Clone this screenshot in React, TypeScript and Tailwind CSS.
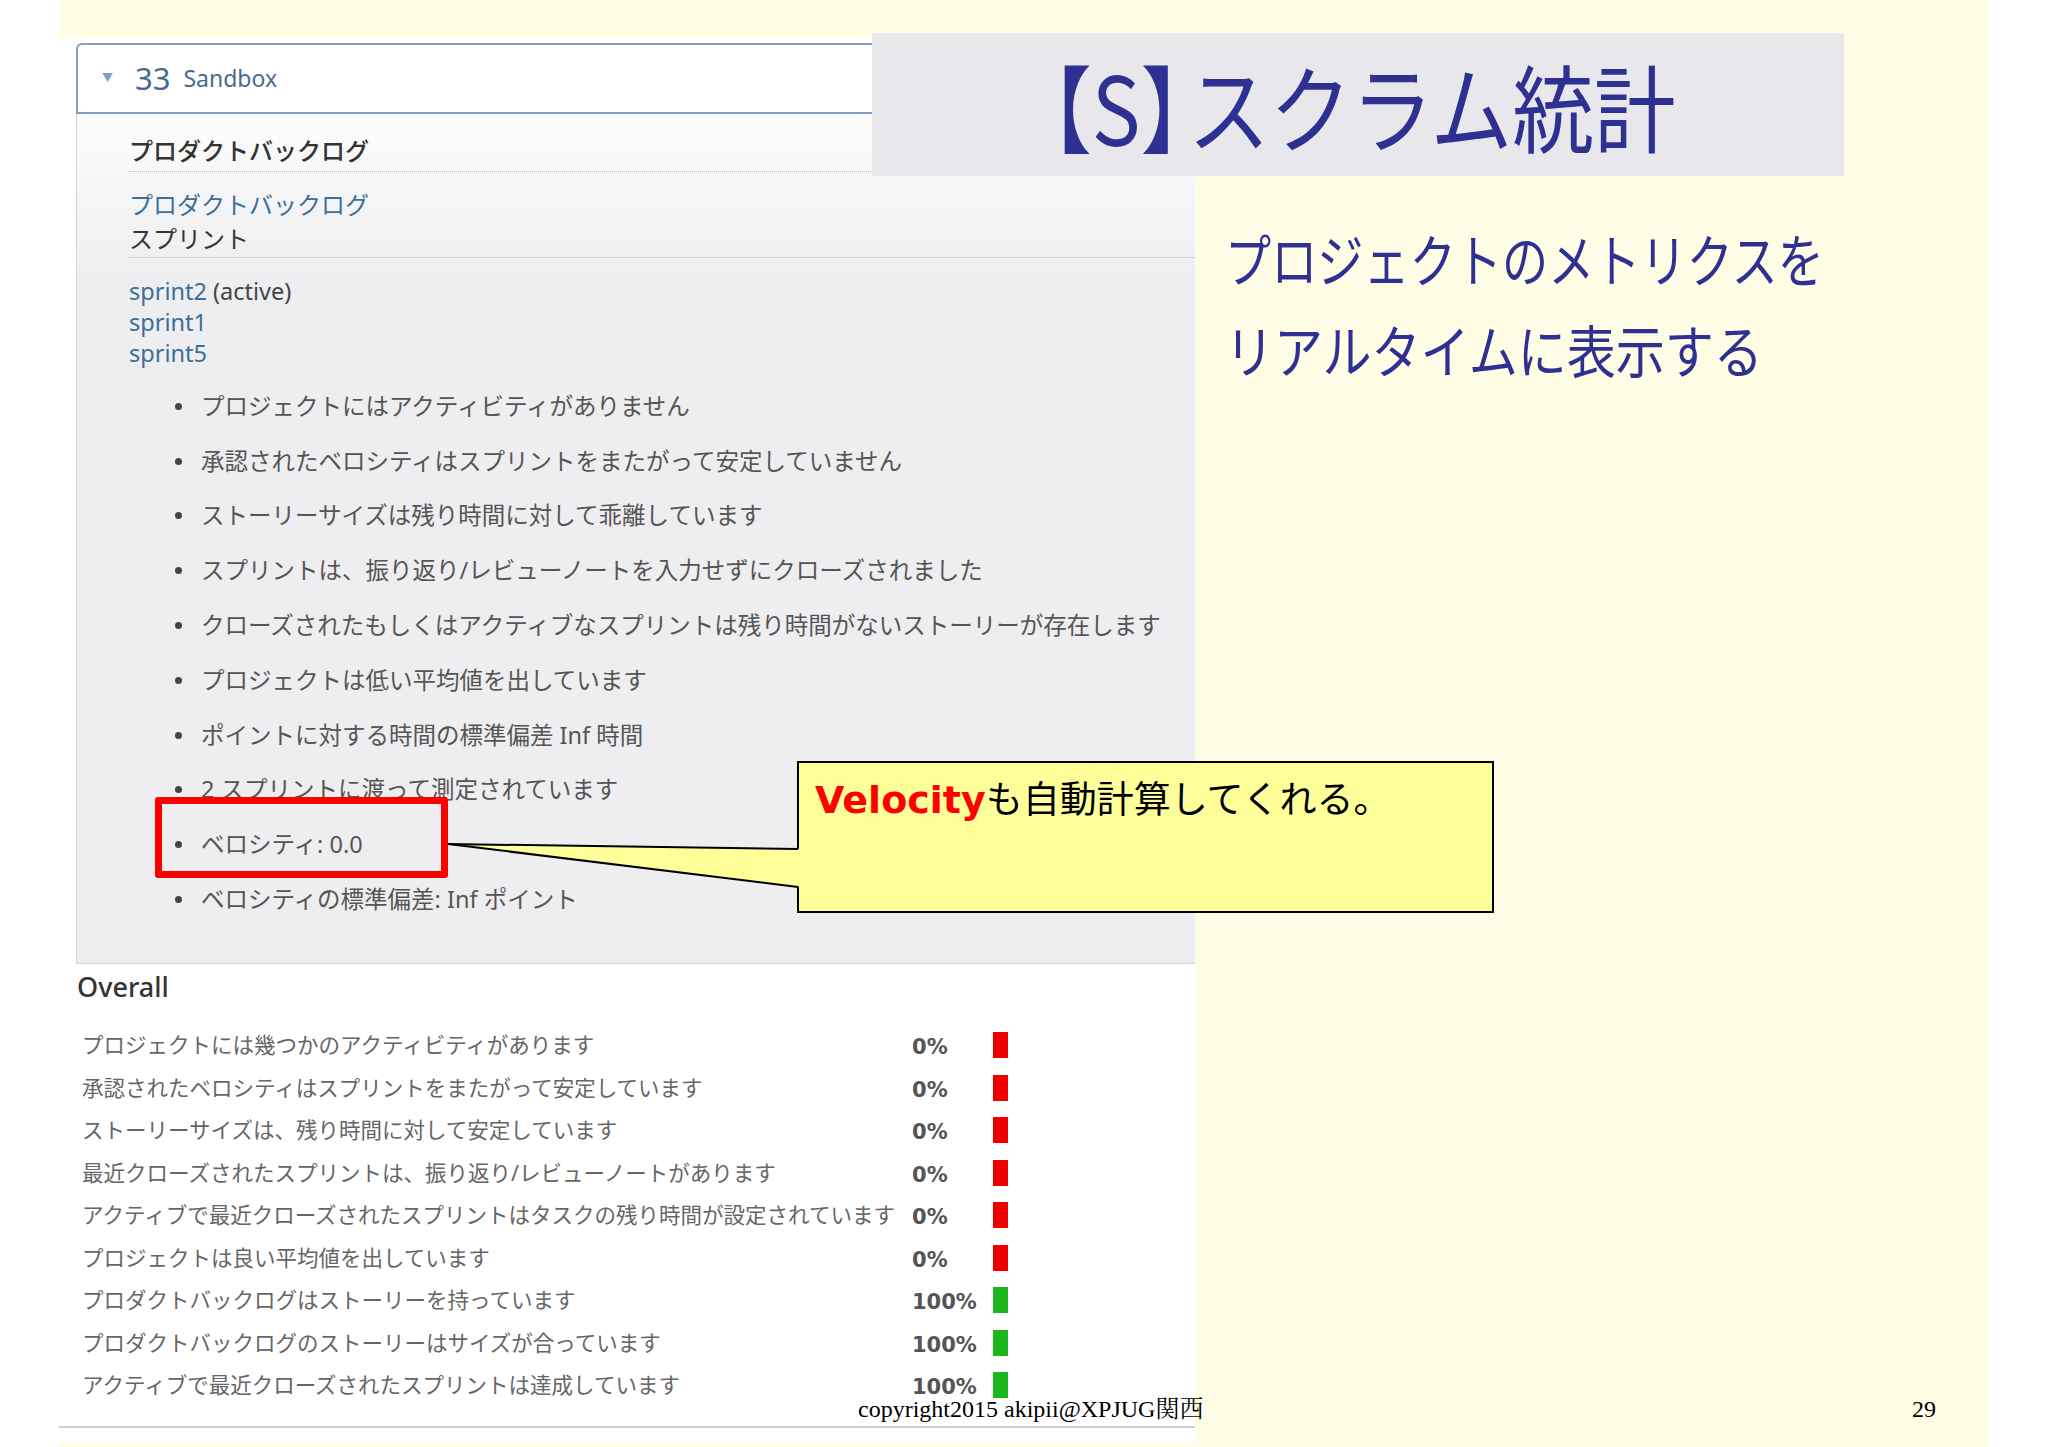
const bullets = [
  'プロジェクトにはアクティビティがありません',
  '承認されたベロシティはスプリントをまたがって安定していません',
  'ストーリーサイズは残り時間に対して乖離しています',
  'スプリントは、振り返り/レビューノートを入力せずにクローズされました',
  'クローズされたもしくはアクティブなスプリントは残り時間がないストーリーが存在します',
  'プロジェクトは低い平均値を出しています',
  'ポイントに対する時間の標準偏差 Inf 時間',
  '2 スプリントに渡って測定されています',
  'ベロシティ: 0.0',
  'ベロシティの標準偏差: Inf ポイント',
];

const overall = [
  { label: 'プロジェクトには幾つかのアクティビティがあります', pct: 0 },
  { label: '承認されたベロシティはスプリントをまたがって安定しています', pct: 0 },
  { label: 'ストーリーサイズは、残り時間に対して安定しています', pct: 0 },
  { label: '最近クローズされたスプリントは、振り返り/レビューノートがあります', pct: 0 },
  { label: 'アクティブで最近クローズされたスプリントはタスクの残り時間が設定されています', pct: 0 },
  { label: 'プロジェクトは良い平均値を出しています', pct: 0 },
  { label: 'プロダクトバックログはストーリーを持っています', pct: 100 },
  { label: 'プロダクトバックログのストーリーはサイズが合っています', pct: 100 },
  { label: 'アクティブで最近クローズされたスプリントは達成しています', pct: 100 },
];

function Screenshot() {
  return (
    <div className="w-[1136px] h-[1405px] shrink-0 bg-white font-['Noto_Sans','Noto_Sans_CJK_JP',sans-serif]">
      <div className="ml-[17px] mt-[5px]">
        {/* panel header */}
        <div className="h-[71px] flex items-center border-2 border-r-0 border-[#7f9fc6] rounded-tl-md bg-white">
          <span className="ml-[24px] text-[11px] text-[#7f9fc6]">▼</span>
          <span className="ml-[22px] text-[31px] leading-none text-[#4b6a90]">33</span>
          <span className="ml-[13px] text-[23px] leading-none text-[#4b6a90]">Sandbox</span>
        </div>
        {/* panel body */}
        <div className="border-l border-b border-[#d8d8d8] bg-linear-to-b from-[#fcfcfc] to-[#eeeef0] to-20% pl-[52px] pt-[21px] pb-[36px]">
          <div className="border-b border-dotted border-[#b8b8b8] pb-[4px]">
            <div className="text-[24px] leading-[32px] text-[#333] font-medium">プロダクトバックログ</div>
          </div>
          <div className="mt-[16px] border-b border-dotted border-[#b8b8b8] pb-[1px]">
            <div className="text-[24px] leading-[34px] text-[#3b6f9a]">プロダクトバックログ</div>
            <div className="text-[24px] leading-[34px] text-[#333]">スプリント</div>
          </div>
          <div className="mt-[18px] text-[23.5px] leading-[31px]">
            <div className="text-[#3b6f9a]">
              sprint2 <span className="text-[#444]">(active)</span>
            </div>
            <div className="text-[#3b6f9a]">sprint1</div>
            <div className="text-[#3b6f9a]">sprint5</div>
          </div>
          <ul className="mt-[10px]">
            {bullets.map((b) => (
              <li key={b} className="h-[54.8px] flex items-center text-[23.5px] text-[#555]">
                <span className="ml-[46px] w-[7px] h-[7px] rounded-full bg-[#444] shrink-0" />
                <span className="ml-[19px] whitespace-nowrap">{b}</span>
              </li>
            ))}
          </ul>
        </div>
      </div>
      <div className="mt-[5px] pl-[18px] text-[27px] leading-[36px] text-[#333] font-medium">Overall</div>
      <div className="mt-[19px] pl-[23px]">
        {overall.map((r) => (
          <div key={r.label} className="h-[42.5px] flex items-center">
            <span className="w-[830px] whitespace-nowrap text-[21.5px] text-[#666]">{r.label}</span>
            <span className="w-[81px] mt-[5px] font-['DejaVu_Sans',sans-serif] font-bold text-[21px] leading-none text-[#555]">{r.pct}%</span>
            <span className={r.pct === 100 ? 'w-[15px] h-[26px] bg-[#1cb51c]' : 'w-[15px] h-[26px] bg-[#ee0000]'} />
          </div>
        ))}
      </div>
      <div className="mt-[20px] h-[2px] bg-[#d0d0d0]" />
    </div>
  );
}

export default function App() {
  return (
    <div className="relative w-[2048px] h-[1447px] bg-white overflow-hidden">
      <div className="ml-[59px] w-[1930px] h-full bg-[#fffde6] pt-[38px] flex">
        <Screenshot />
        <div className="pl-[30px] pt-[174px] font-['Noto_Sans_CJK_JP',sans-serif] text-[#2e3192] text-[57px] leading-[91px]">
          <div className="origin-left scale-x-[0.81] whitespace-nowrap">プロジェクトのメトリクスを</div>
          <div className="origin-left scale-x-[0.86] whitespace-nowrap">リアルタイムに表示する</div>
        </div>
      </div>

      {/* slide title */}
      <div className="absolute left-[872px] top-[33px] w-[972px] h-[143px] bg-[#e8e8ec] flex items-center justify-center">
        <div className="-ml-[30px] scale-x-[0.86] whitespace-nowrap font-['Noto_Sans_CJK_JP',sans-serif] text-[95px] leading-none text-[#2e3192]">
          【S<span className="tracking-[-0.42em]">】</span>スクラム統計
        </div>
      </div>

      {/* highlight */}
      <div className="absolute left-[155px] top-[797px] w-[293px] h-[81px] border-[7px] border-[#ff0000] rounded-[3px]" />

      {/* callout */}
      <div className="absolute left-[797px] top-[761px] w-[697px] h-[152px] border-2 border-black bg-[#ffff99] pl-[16px] pt-[12px] whitespace-nowrap">
        <span className="font-['DejaVu_Sans',sans-serif] font-bold text-[38px] leading-[44px] text-[#ff0000]">Velocity</span>
        <span className="font-['Noto_Sans_CJK_JP',sans-serif] text-[37px] leading-[44px] text-black">も自動計算してくれる。</span>
      </div>
      <svg className="absolute left-[440px] top-[835px]" width="364" height="60" viewBox="440 835 364 60">
        <polygon points="448,844 803,849 803,887" fill="#ffff99" />
        <line x1="448" y1="844" x2="798" y2="849" stroke="black" strokeWidth="2" />
        <line x1="448" y1="844" x2="798" y2="887" stroke="black" strokeWidth="2" />
      </svg>

      {/* footer */}
      <div className="absolute left-[858px] top-[1397px] font-['Liberation_Serif','Noto_Serif_CJK_JP','Noto_Sans_CJK_JP',serif] text-[24px] leading-none text-black whitespace-nowrap">
        copyright2015 akipii@XPJUG関西
      </div>
      <div className="absolute left-[1912px] top-[1397px] font-['Liberation_Serif',serif] text-[24px] leading-none text-black">
        29
      </div>
    </div>
  );
}
